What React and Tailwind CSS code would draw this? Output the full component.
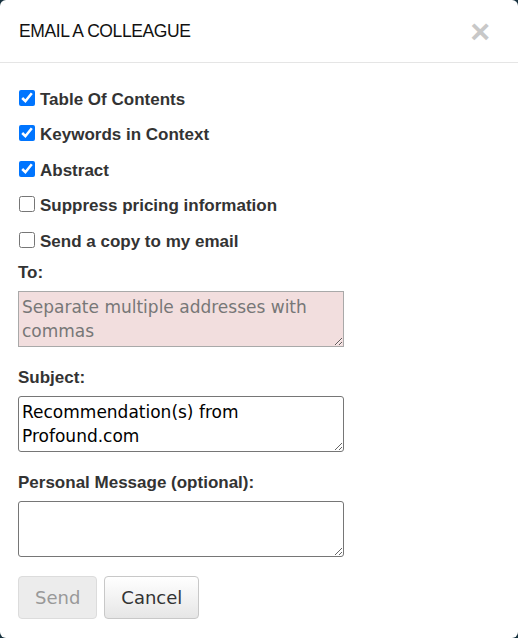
import React from 'react';

const options = [
  { label: 'Table Of Contents', checked: true },
  { label: 'Keywords in Context', checked: true },
  { label: 'Abstract', checked: true },
  { label: 'Suppress pricing information', checked: false },
  { label: 'Send a copy to my email', checked: false },
];

const Field = ({ label, value, placeholder, error }) => (
  <div className="flex flex-col">
    <label className="text-[17px] font-bold text-[#333] leading-[22px]">{label}</label>
    <textarea
      defaultValue={value}
      placeholder={placeholder}
      className={`mt-[7px] w-[326px] h-[56px] px-[3px] py-[3px] text-[17px] leading-[24px] text-black font-['DejaVu_Sans',sans-serif] border rounded-[3px] outline-none ${
        error ? 'bg-[#f2dede] border-[#a9a9a9] rounded-none placeholder:text-[#777]' : 'bg-white border-[#767676]'
      }`}
    />
  </div>
);

export default function App() {
  return (
    <div className="min-h-[638px] bg-[#17323f]">
      <div className="bg-white rounded-[6px] min-h-[638px] font-['Liberation_Sans',Arial,sans-serif]">
        <div className="flex items-center justify-between h-[63px] border-b border-[#e5e5e5] pl-[19px] pr-[28px]">
          <h1 className="text-[17.5px] text-[#111] tracking-[-0.4px]">EMAIL A COLLEAGUE</h1>
          <button className="text-[34px] leading-none font-bold text-[#c8c8c8] font-['Liberation_Sans',Arial,sans-serif]">×</button>
        </div>

        <div className="px-[18px] pt-[27px]">
          <div className="flex flex-col gap-[16.5px]">
            {options.map((o) => (
              <label key={o.label} className="flex items-center h-[19px] text-[17px] font-bold text-[#333]">
                <input
                  type="checkbox"
                  defaultChecked={o.checked}
                  className="w-[16px] h-[16px] ml-[1px] mr-[5px] -mt-[4px]"
                />
                {o.label}
              </label>
            ))}
          </div>

          <div className="mt-[11px] flex flex-col gap-[20px]">
            <Field label="To:" placeholder="Separate multiple addresses with commas" error />
            <Field label="Subject:" value={'Recommendation(s) from Profound.com'} />
            <Field label="Personal Message (optional):" value="" />
          </div>

          <div className="mt-[19px] flex gap-[7px] font-['DejaVu_Sans',sans-serif] text-[18px]">
            <button
              disabled
              className="h-[43px] px-[16px] rounded-[4px] border border-[#dcdcdc] bg-[#ececec] text-[#999]"
            >
              Send
            </button>
            <button className="h-[43px] px-[16px] rounded-[4px] border border-[#c8c8c8] bg-gradient-to-b from-white to-[#e6e6e6] text-[#333]">
              Cancel
            </button>
          </div>
        </div>
      </div>
    </div>
  );
}
